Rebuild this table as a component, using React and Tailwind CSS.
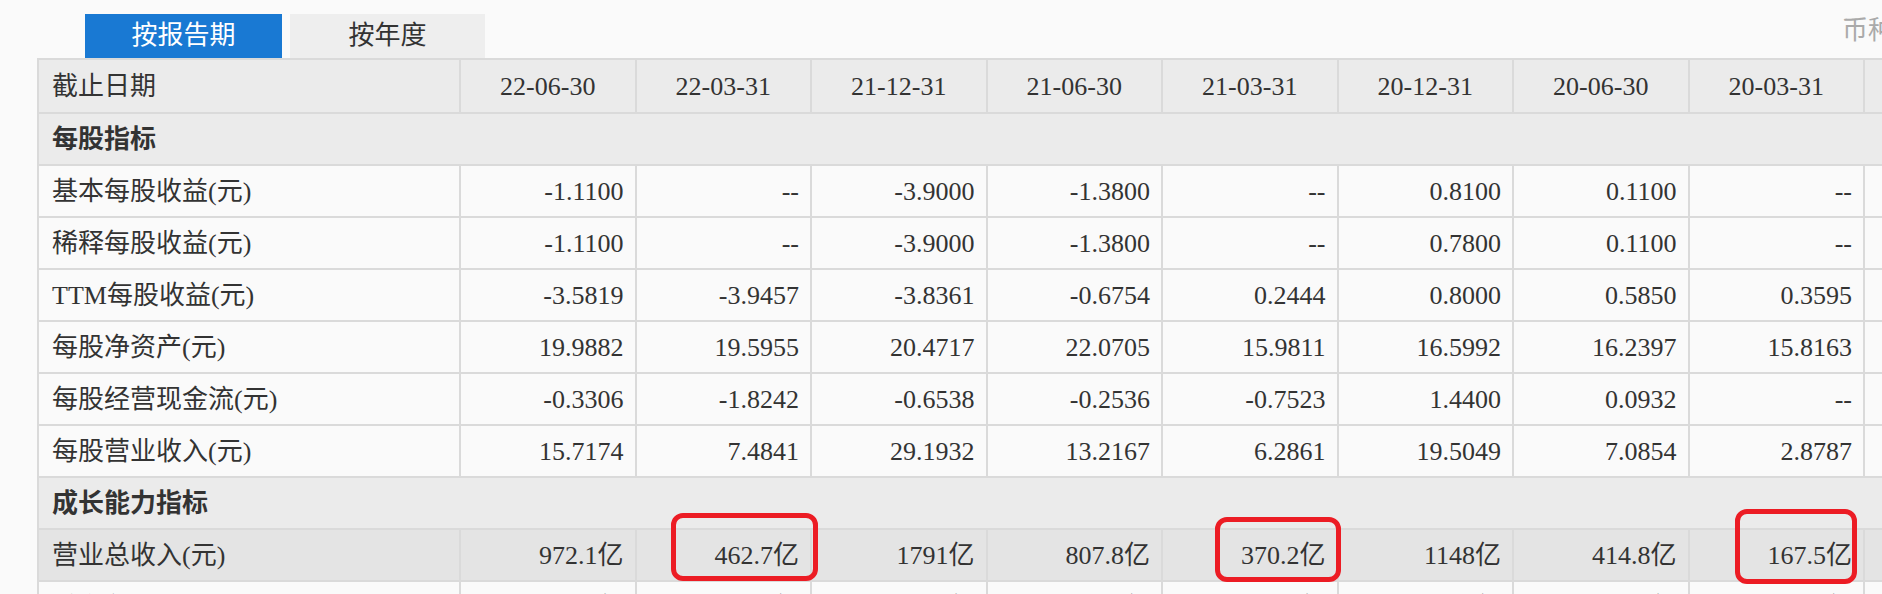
import React from "react";

const dates = ["22-06-30", "22-03-31", "21-12-31", "21-06-30", "21-03-31", "20-12-31", "20-06-30", "20-03-31", "19-12-31"];

const rows = [
  { section: "每股指标" },
  { label: "基本每股收益(元)", values: ["-1.1100", "--", "-3.9000", "-1.3800", "--", "0.8100", "0.1100", "--", "2.0600"] },
  { label: "稀释每股收益(元)", values: ["-1.1100", "--", "-3.9000", "-1.3800", "--", "0.7800", "0.1100", "--", "2.0600"] },
  { label: "TTM每股收益(元)", values: ["-3.5819", "-3.9457", "-3.8361", "-0.6754", "0.2444", "0.8000", "0.5850", "0.3595", "2.0600"] },
  { label: "每股净资产(元)", values: ["19.9882", "19.5955", "20.4717", "22.0705", "15.9811", "16.5992", "16.2397", "15.8163", "15.4360"] },
  { label: "每股经营现金流(元)", values: ["-0.3306", "-1.8242", "-0.6538", "-0.2536", "-0.7523", "1.4400", "0.0932", "--", "1.6200"] },
  { label: "每股营业收入(元)", values: ["15.7174", "7.4841", "29.1932", "13.2167", "6.2861", "19.5049", "7.0854", "2.8787", "24.1000"] },
  { section: "成长能力指标" },
  { label: "营业总收入(元)", values: ["972.1亿", "462.7亿", "1791亿", "807.8亿", "370.2亿", "1148亿", "414.8亿", "167.5亿", "1072亿"], hot: true },
  { label: "毛利润(元)", values: ["91.47亿", "31.79亿", "123.4亿", "71.27亿", "25.11亿", "153.9亿", "60.12亿", "22.47亿", "170.4亿"] },
];

function Mark({ className }) {
  return <div className={"pointer-events-none absolute rounded-[12px] border-[5px] border-[#ec1c24] " + className} />;
}

export default function App() {
  return (
    <div
      className="relative h-[594px] w-[1882px] overflow-hidden bg-[#fafafa] text-[#333]"
      style={{ fontFamily: '"Liberation Serif", "Noto Sans CJK SC", serif' }}
    >
      <div className="flex h-[58px] items-end gap-[8px] pl-[85px]">
        <button className="h-[44px] w-[197px] shrink-0 bg-[#1979d3] text-[26px] leading-[44px] text-white">按报告期</button>
        <button className="h-[44px] w-[195px] shrink-0 bg-[#eeeeee] text-[26px] leading-[44px] text-[#333]">按年度</button>
        <div className="mb-[8px] ml-[1349px] shrink-0 whitespace-nowrap text-[26px] text-[#aaa]">币种:人民币</div>
      </div>

      <div className="pl-[37px]">
        <table className="table-fixed border-collapse text-[26px]" style={{ width: 422 + 175.5 * 9 }}>
          <colgroup>
            <col className="w-[422px]" />
            {dates.map((d) => (
              <col key={d} className="w-[175.5px]" />
            ))}
          </colgroup>
          <thead>
            <tr className="h-[54px] bg-[#ebebeb]">
              <th className="border-2 border-[#dadada] pl-[13px] text-left font-normal">截止日期</th>
              {dates.map((d) => (
                <th key={d} className="border-2 border-[#dadada] text-center font-normal">{d}</th>
              ))}
            </tr>
          </thead>
          <tbody>
            {rows.map((r, i) =>
              r.section ? (
                <tr key={i} className="h-[52px] bg-[#ebebeb]">
                  <td colSpan={10} className="border-2 border-[#dadada] pl-[13px] font-bold">{r.section}</td>
                </tr>
              ) : (
                <tr key={i} className={"h-[52px] " + (r.hot ? "bg-[#e4e4e4]" : "bg-[#fafafa]")}>
                  <td className="border-2 border-[#dadada] pl-[13px] whitespace-nowrap">{r.label}</td>
                  {r.values.map((v, j) => (
                    <td key={j} className="border-2 border-[#dadada] pr-[11px] text-right whitespace-nowrap">{v}</td>
                  ))}
                </tr>
              )
            )}
          </tbody>
        </table>
      </div>

      <Mark className="left-[671px] top-[513px] h-[68px] w-[147px]" />
      <Mark className="left-[1215px] top-[517px] h-[65px] w-[126px]" />
      <Mark className="left-[1735px] top-[509px] h-[75px] w-[122px]" />
    </div>
  );
}
